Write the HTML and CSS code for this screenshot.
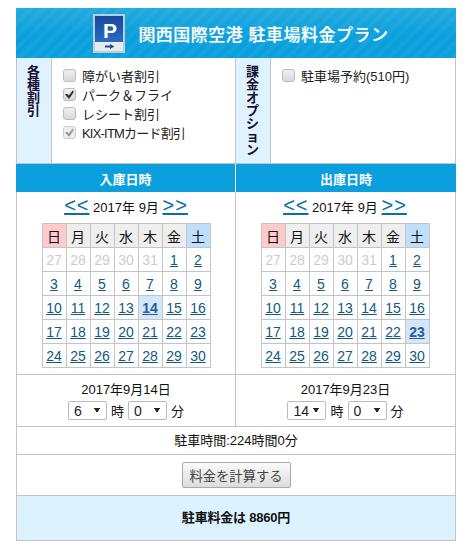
FILE: index.html
```html
<!DOCTYPE html>
<html lang="ja">
<head>
<meta charset="utf-8">
<title>関西国際空港 駐車場料金プラン</title>
<link rel="stylesheet" href="styles.css">
</head>
<body>
<main class="plan">
  <header class="banner">
    <svg class="logo" width="32" height="39" viewBox="0 0 32 39" aria-hidden="true">
      <defs>
        <linearGradient id="logoBlue" x1="0" y1="0" x2="0" y2="1">
          <stop offset="0" stop-color="#16479a"/>
          <stop offset="1" stop-color="#2a6cc4"/>
        </linearGradient>
      </defs>
      <rect x="0" y="0" width="32" height="39" fill="#b9cfd8"/>
      <rect x="2" y="2" width="28" height="35" fill="#e9eaea"/>
      <rect x="2" y="2" width="28" height="26" fill="url(#logoBlue)"/>
      <path d="M12 31.500h5V30l4.500 2.500-4.500 2.500v-1.500h-5z" fill="#1f4f98"/>
      <text x="17" y="24" text-anchor="middle" class="logo-p">P</text>
    </svg>
    <h1>関西国際空港 駐車場料金プラン</h1>
  </header>

  <section class="two options">
    <div class="option-col">
      <h2 class="side">各種割引</h2>
      <div class="checks">
        <label><input type="checkbox">障がい者割引</label>
        <label><input type="checkbox" checked>パーク＆フライ</label>
        <label><input type="checkbox">レシート割引</label>
        <label class="tight"><input type="checkbox" checked disabled>KIX-ITMカード割引</label>
      </div>
    </div>
    <div class="option-col">
      <h2 class="side">課金オプション</h2>
      <div class="checks">
        <label><input type="checkbox">駐車場予約(510円)</label>
      </div>
    </div>
  </section>

  <section class="two heads">
    <div>入庫日時</div>
    <div>出庫日時</div>
  </section>

  <section class="two cals">
    <div class="cal">
      <p class="nav"><a href="#">&lt;&lt;</a> 2017年 9月 <a href="#">&gt;&gt;</a></p>
      <table>
        <tr><th class="sun">日</th><th>月</th><th>火</th><th>水</th><th>木</th><th>金</th><th class="sat">土</th></tr>
        <tr><td class="off">27</td><td class="off">28</td><td class="off">29</td><td class="off">30</td><td class="off">31</td><td><a href="#">1</a></td><td><a href="#">2</a></td></tr>
        <tr><td><a href="#">3</a></td><td><a href="#">4</a></td><td><a href="#">5</a></td><td><a href="#">6</a></td><td><a href="#">7</a></td><td><a href="#">8</a></td><td><a href="#">9</a></td></tr>
        <tr><td><a href="#">10</a></td><td><a href="#">11</a></td><td><a href="#">12</a></td><td><a href="#">13</a></td><td class="picked"><a href="#">14</a></td><td><a href="#">15</a></td><td><a href="#">16</a></td></tr>
        <tr><td><a href="#">17</a></td><td><a href="#">18</a></td><td><a href="#">19</a></td><td><a href="#">20</a></td><td><a href="#">21</a></td><td><a href="#">22</a></td><td><a href="#">23</a></td></tr>
        <tr><td><a href="#">24</a></td><td><a href="#">25</a></td><td><a href="#">26</a></td><td><a href="#">27</a></td><td><a href="#">28</a></td><td><a href="#">29</a></td><td><a href="#">30</a></td></tr>
      </table>
    </div>
    <div class="cal">
      <p class="nav"><a href="#">&lt;&lt;</a> 2017年 9月 <a href="#">&gt;&gt;</a></p>
      <table>
        <tr><th class="sun">日</th><th>月</th><th>火</th><th>水</th><th>木</th><th>金</th><th class="sat">土</th></tr>
        <tr><td class="off">27</td><td class="off">28</td><td class="off">29</td><td class="off">30</td><td class="off">31</td><td><a href="#">1</a></td><td><a href="#">2</a></td></tr>
        <tr><td><a href="#">3</a></td><td><a href="#">4</a></td><td><a href="#">5</a></td><td><a href="#">6</a></td><td><a href="#">7</a></td><td><a href="#">8</a></td><td><a href="#">9</a></td></tr>
        <tr><td><a href="#">10</a></td><td><a href="#">11</a></td><td><a href="#">12</a></td><td><a href="#">13</a></td><td><a href="#">14</a></td><td><a href="#">15</a></td><td><a href="#">16</a></td></tr>
        <tr><td><a href="#">17</a></td><td><a href="#">18</a></td><td><a href="#">19</a></td><td><a href="#">20</a></td><td><a href="#">21</a></td><td><a href="#">22</a></td><td class="picked"><a href="#">23</a></td></tr>
        <tr><td><a href="#">24</a></td><td><a href="#">25</a></td><td><a href="#">26</a></td><td><a href="#">27</a></td><td><a href="#">28</a></td><td><a href="#">29</a></td><td><a href="#">30</a></td></tr>
      </table>
    </div>
  </section>

  <section class="two times">
    <div>
      <p>2017年9月14日</p>
      <div class="pick">
        <select><option>6</option></select>時
        <select><option>0</option></select>分
      </div>
    </div>
    <div>
      <p>2017年9月23日</p>
      <div class="pick">
        <select><option>14</option></select>時
        <select><option>0</option></select>分
      </div>
    </div>
  </section>

  <p class="duration">駐車時間:224時間0分</p>
  <div class="action"><button type="button">料金を計算する</button></div>
  <p class="result">駐車料金は 8860円</p>
</main>
</body>
</html>
```

FILE: styles.css
```css
* { box-sizing: border-box; }

html, body { background: #fff; }

body {
  margin: 8px 14px 10px 16px;
  font-family: "Liberation Sans", "Noto Sans CJK JP", sans-serif;
  font-size: 13px;
  color: #111;
}

p, h1, h2 { margin: 0; }

.plan {
  width: 440px;
  border: 1px solid #c4c4c4;
  border-top: 0;
}

.banner {
  height: 50px;
  margin: 0 -1px;
  padding-left: 10px;
  display: flex;
  align-items: center;
  justify-content: center;
  gap: 13px;
  background-color: #0ba0dd;
  background-image:
    linear-gradient(180deg, rgba(255,255,255,.1), rgba(255,255,255,0) 55%),
    repeating-linear-gradient(135deg, rgba(255,255,255,.04) 0 4px, rgba(255,255,255,0) 4px 9px);
}

.logo { flex: none; }
.logo-p { font: bold 21px "Liberation Sans", sans-serif; fill: #fff; }

.banner h1 {
  font-size: 17px;
  font-weight: 500;
  letter-spacing: .5px;
  color: #fff;
  text-shadow: 0 0 1px rgba(255,255,255,.5);
}

.two {
  display: grid;
  grid-template-columns: 219px 219px;
}

.two > div:first-child { border-right: 1px solid #c4c4c4; }

.options { height: 106px; border-bottom: 1px solid #c4c4c4; }

.option-col { display: flex; }

.side {
  flex: none;
  width: 35px;
  padding: 7px 11px 0 10px;
  background: #dff2ff;
  border-right: 1px solid #c4c4c4;
  font-size: 13px;
  line-height: 13px;
  font-weight: 700;
  color: #1a1030;
  text-align: center;
}

.checks {
  padding: 8px 0 0 11px;
  display: flex;
  flex-direction: column;
}

.checks label {
  display: flex;
  align-items: center;
  gap: 6px;
  height: 19px;
  font-size: 13px;
  color: #222;
}

.checks label.tight { letter-spacing: -.8px; }

.checks input {
  appearance: none;
  flex: none;
  width: 13px;
  height: 13px;
  margin: 0;
  position: relative;
  border: 1px solid #bcbcbc;
  border-radius: 3px;
  background: linear-gradient(#f0f0f0, #d8d8d8);
}

.checks input:checked::after {
  content: "";
  position: absolute;
  inset: 1px;
  background: #333;
  clip-path: polygon(0 50%, 25% 42%, 42% 62%, 85% 5%, 100% 20%, 45% 100%);
}

.checks input:disabled { border-color: #ccc; background: #eee; }
.checks input:disabled::after { background: #999; }

.heads {
  height: 28px;
  background: #0ba0dd;
  margin: 0 -1px;
  grid-template-columns: 220px 220px;
}

.heads > div {
  display: flex;
  align-items: center;
  justify-content: center;
  font-size: 13px;
  font-weight: 700;
  color: #fff;
}

.heads > div:first-child { border-right: 1px solid #fff; }

.cals { height: 183px; border-bottom: 1px solid #c4c4c4; }

.cal {
  display: flex;
  flex-direction: column;
  align-items: center;
  padding-top: 1px;
}

.cal:last-child { padding-right: 1px; }

.nav {
  height: 30px;
  line-height: 24px;
  font-size: 13px;
  white-space: nowrap;
}

.nav a {
  font-size: 20px;
  letter-spacing: 1px;
  color: #0a6f9e;
  text-underline-offset: 1px;
}

.cal table {
  border-collapse: collapse;
  table-layout: fixed;
  width: 169px;
}

.cal th, .cal td {
  width: 24px;
  height: 24px;
  padding: 0;
  border: 1px solid #c4c4c4;
  text-align: center;
  font-size: 14px;
}

.cal th {
  font-weight: 400;
  color: #111;
  background: #eee;
}

.cal th.sun { background: #ffcaca; }
.cal th.sat { background: #bfdfff; }

.cal td a { color: #0e5a80; }
.cal td.off { color: #ccc; }
.cal td.picked { background: #d3e6fa; }
.cal td.picked a { color: #2a5a9c; font-weight: 700; }

.times { height: 52px; border-bottom: 1px solid #c4c4c4; }

.times > div {
  display: flex;
  flex-direction: column;
  align-items: center;
  padding-top: 5px;
}

.times p { height: 20px; line-height: 20px; font-size: 13px; }

.pick {
  display: flex;
  align-items: center;
  gap: 4px;
  margin-top: 1px;
  font-size: 13px;
}

.pick select {
  appearance: none;
  width: 39px;
  height: 19px;
  padding: 0 0 0 5px;
  border: 1px solid #bbb;
  border-radius: 2px;
  background-color: #fff;
  background-image:
    linear-gradient(to bottom left, #222 48%, transparent 52%),
    linear-gradient(to bottom right, #222 48%, transparent 52%);
  background-size: 3px 5px;
  background-position: 25px 6px, 28px 6px;
  background-repeat: no-repeat;
  font: 14px "Liberation Sans", sans-serif;
  color: #222;
}

.duration {
  height: 28px;
  line-height: 27px;
  text-align: center;
  border-bottom: 1px solid #c4c4c4;
}

.action {
  height: 41px;
  display: flex;
  align-items: center;
  justify-content: center;
  border-bottom: 1px solid #c4c4c4;
}

.action button {
  width: 109px;
  height: 26px;
  padding: 0;
  border: 1px solid #aaa;
  border-radius: 2px;
  background: linear-gradient(#fafafa, #dcdcdc);
  font: 13.300px "Liberation Sans", "Noto Sans CJK JP", sans-serif;
  color: #444;
}

.result {
  height: 44px;
  line-height: 44px;
  text-align: center;
  font-weight: 700;
  letter-spacing: -.2px;
  background: #dcf2ff;
}
```
